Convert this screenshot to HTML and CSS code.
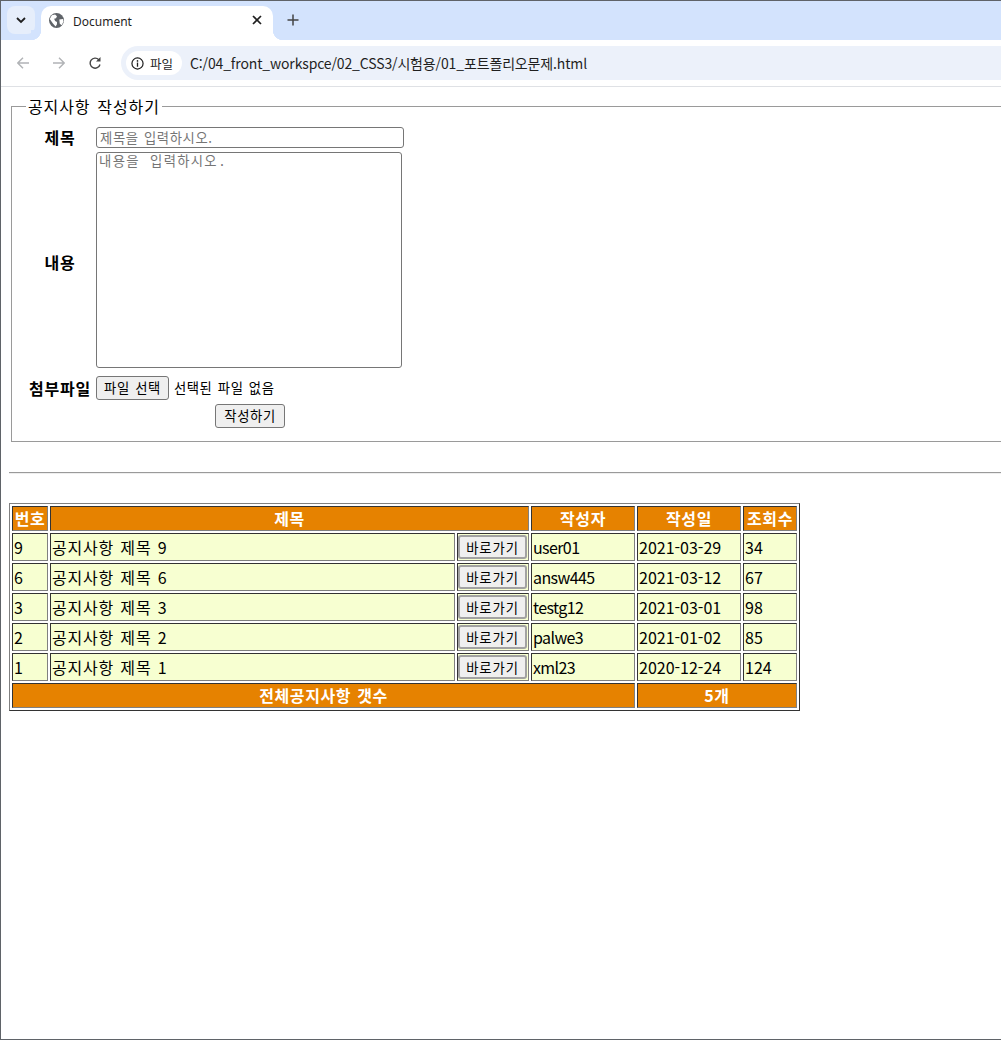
FILE: index.html
```html
<!DOCTYPE html>
<html lang="ko">
<head>
<meta charset="utf-8">
<title>Document</title>
<link rel="stylesheet" href="styles.css">
</head>
<body>
<div class="window">
  <div class="tabbar">
    <div class="tab-search"><svg width="12" height="12" viewBox="0 0 12 12"><path d="M2 4l4 4 4-4" fill="none" stroke="#1f1f1f" stroke-width="1.8"/></svg></div>
    <div class="tab">
      <svg class="globe" width="15" height="15" viewBox="0 0 16 16"><circle cx="8" cy="8" r="8" fill="#5f6368"/><path d="M3 2.500l3.500-1 2 2-1 2-2 .5 1 2.500 2 1v2.500l-1.500 2.500L4 11 .8 6.500zM11 7l4-.5.500 2.500-2 4-2-1.500z" fill="#fff"/></svg>
      <span class="tab-title">Document</span>
      <svg class="tab-close" width="10" height="10" viewBox="0 0 10 10"><path d="M1 1l8 8M9 1l-8 8" stroke="#1f1f1f" stroke-width="1.700"/></svg>
    </div>
    <svg class="new-tab" width="12" height="12" viewBox="0 0 12 12"><path d="M6 .5v11M.5 6h11" stroke="#444" stroke-width="1.500"/></svg>
  </div>
  <div class="toolbar">
    <svg class="nav-icon" width="12" height="12" viewBox="0 0 12 12"><path d="M12 6H1M6 .8L.8 6 6 11.200" fill="none" stroke="#b1b3b6" stroke-width="1.400"/></svg>
    <svg class="nav-icon" width="12" height="12" viewBox="0 0 12 12"><path d="M0 6h11M6 .8L11.200 6 6 11.200" fill="none" stroke="#b1b3b6" stroke-width="1.400"/></svg>
    <svg class="nav-icon" width="12" height="12" viewBox="0 0 12 12"><path d="M11 7.500A5 5 0 1 1 9.800 2.700" fill="none" stroke="#444" stroke-width="1.400"/><path d="M11.500 0v4.500H7z" fill="#444"/></svg>
    <div class="omnibox">
      <div class="chip">
        <svg width="13" height="13" viewBox="0 0 14 14"><circle cx="7" cy="7" r="6" fill="none" stroke="#1f1f1f" stroke-width="1.300"/><path d="M7 6v4.500" stroke="#1f1f1f" stroke-width="1.400"/><circle cx="7" cy="4.200" r=".9" fill="#1f1f1f"/></svg>
        <span>파일</span>
      </div>
      <span class="url">C:/04_front_workspce/02_CSS3/시험용/01_포트폴리오문제.html</span>
    </div>
  </div>
  <main class="page">
    <fieldset class="form-box">
      <legend>공지사항 작성하기</legend>
      <table class="form-table">
        <tr>
          <th>제목</th>
          <td><input class="title-input" type="text" placeholder="제목을 입력하시오."></td>
        </tr>
        <tr>
          <th>내용</th>
          <td><textarea class="content-input" placeholder="내용을 입력하시오."></textarea></td>
        </tr>
        <tr>
          <th>첨부파일</th>
          <td class="file-cell"><button class="btn" type="button">파일 선택</button><span class="file-text">선택된 파일 없음</span></td>
        </tr>
        <tr>
          <th></th>
          <td class="submit-cell"><button class="btn btn-submit" type="button">작성하기</button></td>
        </tr>
      </table>
    </fieldset>
    <hr class="divider">
    <table class="notice">
      <thead>
        <tr><th class="c-no">번호</th><th colspan="2">제목</th><th class="c-author">작성자</th><th class="c-date">작성일</th><th class="c-views">조회수</th></tr>
      </thead>
      <tbody>
        <tr><td>9</td><td class="c-title">공지사항 제목 9</td><td class="c-go"><button class="go" type="button">바로가기</button></td><td class="latin">user01</td><td>2021-03-29</td><td>34</td></tr>
        <tr><td>6</td><td class="c-title">공지사항 제목 6</td><td class="c-go"><button class="go" type="button">바로가기</button></td><td class="latin">answ445</td><td>2021-03-12</td><td>67</td></tr>
        <tr><td>3</td><td class="c-title">공지사항 제목 3</td><td class="c-go"><button class="go" type="button">바로가기</button></td><td class="latin">testg12</td><td>2021-03-01</td><td>98</td></tr>
        <tr><td>2</td><td class="c-title">공지사항 제목 2</td><td class="c-go"><button class="go" type="button">바로가기</button></td><td class="latin">palwe3</td><td>2021-01-02</td><td>85</td></tr>
        <tr><td>1</td><td class="c-title">공지사항 제목 1</td><td class="c-go"><button class="go" type="button">바로가기</button></td><td class="latin">xml23</td><td>2020-12-24</td><td>124</td></tr>
      </tbody>
      <tfoot>
        <tr><th colspan="4">전체공지사항 갯수</th><th colspan="2">5개</th></tr>
      </tfoot>
    </table>
  </main>
</div>
</body>
</html>
```

FILE: styles.css
```css
* { box-sizing: border-box; }
html, body { margin: 0; padding: 0; background: #fff; overflow: hidden; }
body { font-family: "Noto Sans CJK KR", "Noto Sans", sans-serif; color: #000; }
.window { width: 1001px; height: 1040px; border-top: 1px solid #5f6368; border-left: 1px solid #5f6368; border-bottom: 1px solid #5f6368; overflow: hidden; }

.tabbar { height: 39px; background: #d3e3fd; display: flex; align-items: flex-start; padding-left: 6px; }
.tab-search { width: 28px; height: 28px; margin-top: 5px; border-radius: 8px; background: #e6eefb; display: flex; align-items: center; justify-content: center; }
.tab { position: relative; width: 232px; height: 34px; margin: 5px 0 0 6px; border-radius: 10px 10px 0 0; background: #fff; display: flex; align-items: center; padding: 0 11px 6px 8px; font-family: "Noto Sans", sans-serif; font-size: 12px; color: #1f1f1f; }
.tab::before, .tab::after { content: ""; position: absolute; bottom: 0; width: 10px; height: 10px; }
.tab::before { left: -10px; background: radial-gradient(circle at 0 0, #d3e3fd 10px, #fff 10.5px); }
.tab::after { right: -10px; background: radial-gradient(circle at 100% 0, #d3e3fd 10px, #fff 10.5px); }
.globe { flex: none; }
.tab-title { margin-left: 9px; flex: 1; position: relative; top: 1px; }
.new-tab { margin: 13px 0 0 14px; }

.toolbar { height: 47px; background: #fff; border-bottom: 1px solid #dfe1e5; border-radius: 10px 0 0 0; display: flex; align-items: center; padding: 0 0 0 16px; gap: 24px; }
.nav-icon { flex: none; }
.omnibox { flex: 1; height: 34px; margin-left: -4px; border-radius: 17px 0 0 17px; background: #ecf1fa; display: flex; align-items: center; padding-left: 5px; }
.chip { height: 24px; width: 56px; border-radius: 12px; background: #fff; display: flex; align-items: center; padding-left: 5px; gap: 6px; font-size: 12.500px; color: #1f1f1f; }
.url { margin-left: 8px; font-size: 14px; letter-spacing: -.14px; color: #1f1f1f; white-space: nowrap; }

.page { padding: 8px; width: 1120px; }
.form-box { margin: 0 2px; padding: 6px 14px 10px; border: 1px solid #9a9a9a; min-inline-size: 0; }
.form-box legend { padding: 0 2px; font-size: 16px; line-height: 22px; letter-spacing: .9px; word-spacing: 1.500px; }
.form-table { border-spacing: 2px; border-collapse: separate; }
.form-table th { font-size: 16px; font-weight: bold; padding: 1px 2px 1px 1px; line-height: 22px; letter-spacing: .8px; }
.form-table td { padding: 1px; font-size: 13.330px; }
.title-input { display: block; width: 308px; height: 21px; border: 1px solid #767676; border-radius: 3px; padding: 1px 3px; font-family: inherit; font-size: 13.330px; letter-spacing: .6px; word-spacing: 1px; }
.title-input::placeholder { color: #757575; }
.content-input { display: block; width: 306px; height: 216px; margin-bottom: 4px; border: 1px solid #767676; border-radius: 3px; padding: 2px; resize: none; font-family: "Liberation Mono", "Noto Sans CJK KR", monospace; font-size: 13.330px; line-height: 16px; letter-spacing: 1.300px; word-spacing: 1px; }
.content-input::placeholder { color: #757575; }
.btn { height: 24px; padding: 1px 7px; border: 1px solid #767676; border-radius: 3px; background: #efefef; font-family: inherit; font-size: 13.330px; letter-spacing: .6px; word-spacing: 1px; color: #000; line-height: 18px; }
.btn-submit { padding: 1px 8px; }
.file-cell { white-space: nowrap; }
.file-text { margin-left: 5px; letter-spacing: .6px; word-spacing: 1px; }
.submit-cell { text-align: center; }

.divider { margin: 30px 0 29px; border: 0; border-top: 1px solid #9a9a9a; border-bottom: 1px solid #eee; }

.notice { width: 791px; border: 1px solid; border-color: #808080 #333 #333 #808080; border-spacing: 2px; border-collapse: separate; font-size: 16px; word-spacing: 1px; }
.notice th { background: #e68200; color: #fff; border: 1px solid; border-color: #333 #808080 #808080 #333; padding: 0 1px; line-height: 21px; height: 25px; letter-spacing: .6px; }
.notice td { background: #f7ffd1; border: 1px solid; border-color: #333 #808080 #808080 #333; padding: 1px; height: 28px; line-height: 22px; }
.notice .c-title { width: 405px; letter-spacing: .8px; }
.notice .latin { letter-spacing: -.6px; }
.c-no { width: 36px; }
.c-author { width: 104px; }
.c-date { width: 104px; }
.c-views { width: 54px; }
.notice td.c-go { padding: 1px 0; width: 72px; }
.go { display: block; width: 69px; height: 24px; padding: 0; border: 2px solid #a2a2a2; border-radius: 3px; background: #efefef; font-family: inherit; font-size: 13.330px; letter-spacing: .9px; color: #000; }
```
